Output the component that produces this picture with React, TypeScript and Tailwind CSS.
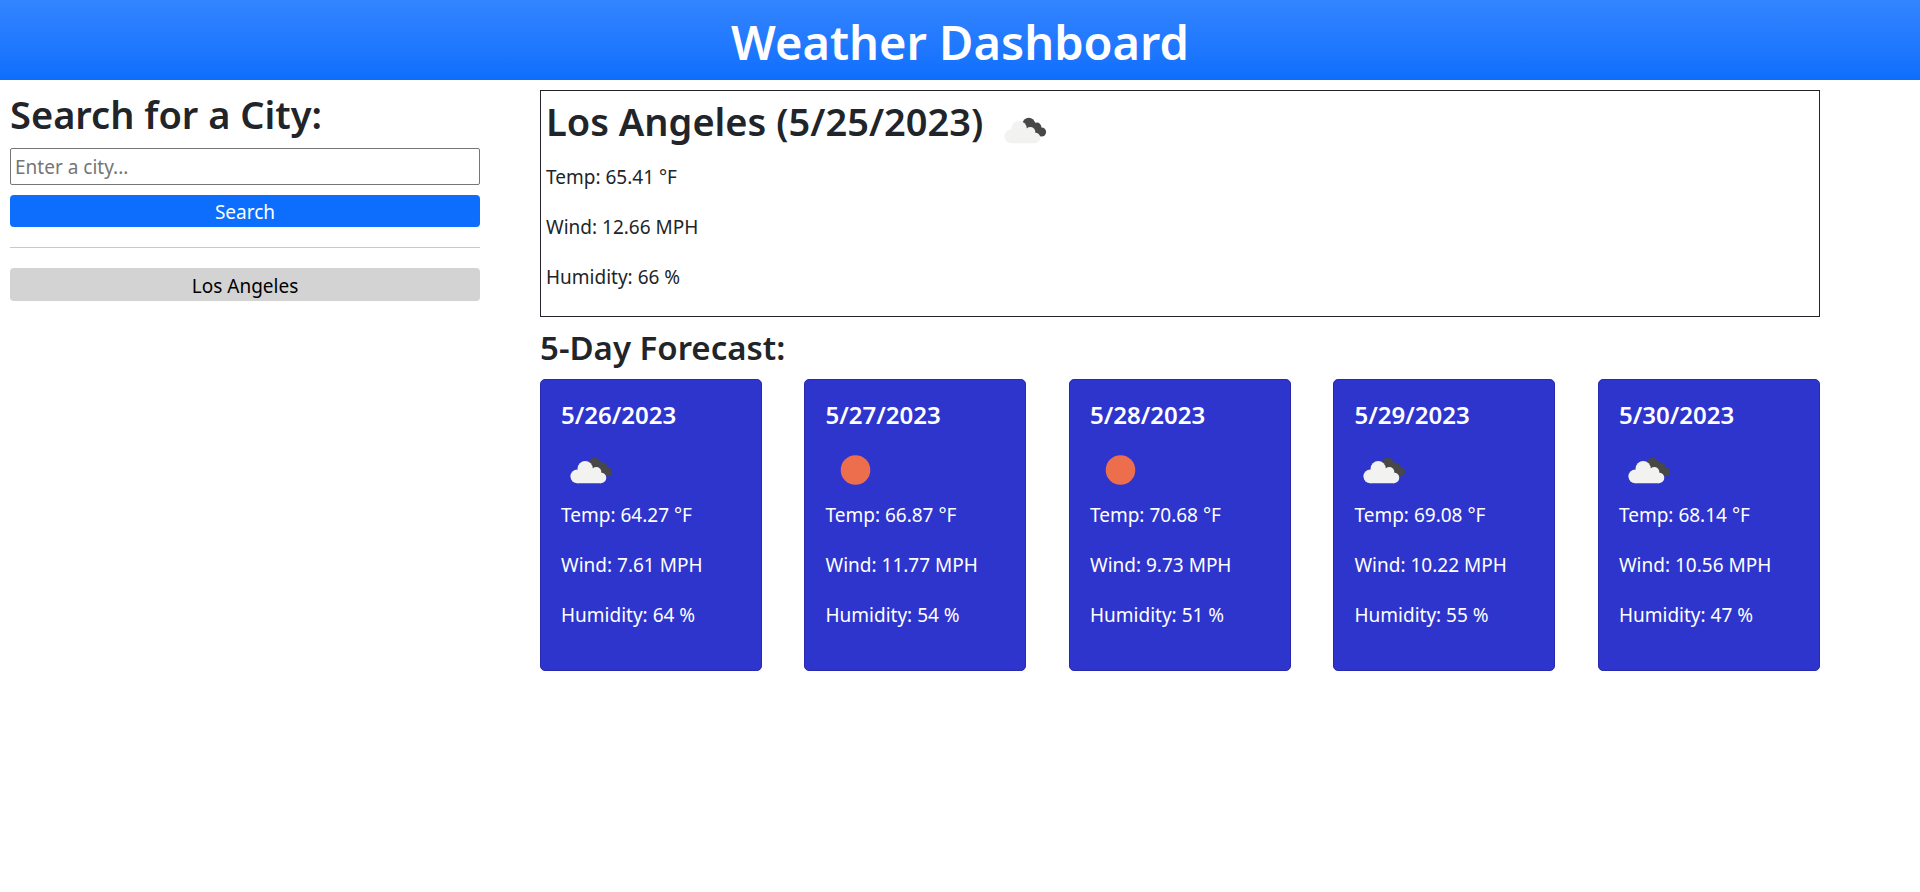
type Condition = 'clouds' | 'clear';

interface Weather {
  date: string;
  condition: Condition;
  temp: string;
  wind: string;
  humidity: string;
}

const today: Weather = { date: '5/25/2023', condition: 'clouds', temp: '65.41', wind: '12.66', humidity: '66' };

const forecast: Weather[] = [
  { date: '5/26/2023', condition: 'clouds', temp: '64.27', wind: '7.61', humidity: '64' },
  { date: '5/27/2023', condition: 'clear', temp: '66.87', wind: '11.77', humidity: '54' },
  { date: '5/28/2023', condition: 'clear', temp: '70.68', wind: '9.73', humidity: '51' },
  { date: '5/29/2023', condition: 'clouds', temp: '69.08', wind: '10.22', humidity: '55' },
  { date: '5/30/2023', condition: 'clouds', temp: '68.14', wind: '10.56', humidity: '47' },
];

function WeatherIcon({ condition }: { condition: Condition }) {
  return (
    <svg viewBox="0 0 60 60" className="size-[60px] shrink-0" role="img" aria-label={condition}>
      {condition === 'clear' ? (
        <circle cx="30.5" cy="30" r="14.8" fill="#ec6e4c" />
      ) : (
        <>
          <g fill="#484848">
            <circle cx="33.8" cy="24" r="6.3" />
            <circle cx="41.8" cy="27.2" r="4.6" />
            <circle cx="46.6" cy="32" r="4.5" />
            <path d="M31 24 L42 23 L50 33 L44 36 L36 31 Z" />
          </g>
          <g fill="#f2f2f0">
            <circle cx="16.3" cy="36.3" r="6.9" />
            <circle cx="24.2" cy="28.5" r="7.6" />
            <circle cx="35.3" cy="32" r="5" />
            <circle cx="39.9" cy="37.8" r="5.4" />
            <path d="M16.3 30 L24 26 L36 30 L40 33 V43.2 H16.3 Z" />
          </g>
        </>
      )}
    </svg>
  );
}

function Readings({ day }: { day: Weather }) {
  return (
    <>
      <p className="mb-5">Temp: {day.temp} °F</p>
      <p className="mb-5">Wind: {day.wind} MPH</p>
      <p className="mb-5">Humidity: {day.humidity} %</p>
    </>
  );
}

export default function App() {
  return (
    <div className="min-h-screen bg-white font-['Segoe_UI','Noto_Sans',sans-serif] text-[19px] leading-[30px] text-[#212529]">
      <header className="flex h-20 items-center justify-center bg-linear-to-b from-[#3385ff] to-[#0d6efd] pt-1">
        <h1 className="text-[47px] leading-[60px] font-semibold text-white">Weather Dashboard</h1>
      </header>

      <div className="flex items-start pt-2.5">
        <aside className="w-1/4 pl-2.5">
          <form onSubmit={(e) => e.preventDefault()}>
            <h2 className="mb-2.5 text-[38px] leading-[48px] font-semibold">
              <label htmlFor="city">Search for a City:</label>
            </h2>
            <input
              id="city"
              type="text"
              placeholder="Enter a city..."
              className="mb-2.5 block h-[37px] w-full rounded-[2px] border border-[#767676] bg-white px-1 placeholder:text-[#757575]"
            />
            <button type="submit" className="block h-8 w-full rounded bg-[#0d6efd] pt-0.5 text-white">
              Search
            </button>
          </form>
          <hr className="my-5 border-[#c8c9ca]" />
          <button type="button" className="block h-[33px] w-full rounded bg-[#d3d3d3] pt-0.5 text-black">
            Los Angeles
          </button>
        </aside>

        <main className="ml-[60px] w-2/3">
          <section className="mb-2.5 border border-[#212529] px-[5px] pt-[5px] pb-1">
            <div className="flex h-[66px] items-start gap-3">
              <h2 className="text-[38px] leading-[50px] font-semibold">Los Angeles ({today.date})</h2>
              <div className="pt-1">
                <WeatherIcon condition={today.condition} />
              </div>
            </div>
            <Readings day={today} />
          </section>

          <h3 className="mb-2.5 text-[33px] leading-[42px] font-semibold">5-Day Forecast:</h3>
          <div className="flex justify-between">
            {forecast.map((day) => (
              <article key={day.date} className="w-[222px] rounded-[5px] border border-[#2929b0] bg-[#2e35cd] p-5 text-white">
                <h4 className="mb-2.5 text-2xl leading-[30px] font-semibold">{day.date}</h4>
                <WeatherIcon condition={day.condition} />
                <Readings day={day} />
              </article>
            ))}
          </div>
        </main>
      </div>
    </div>
  );
}
